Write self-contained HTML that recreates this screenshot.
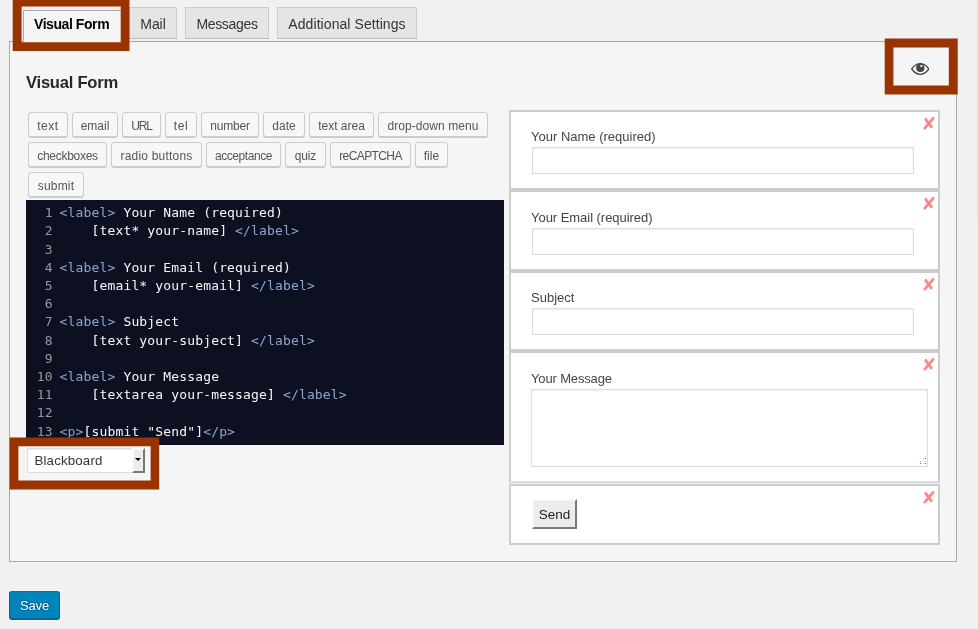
<!DOCTYPE html>
<html lang="en">
<head>
<meta charset="utf-8">
<title>Visual Form</title>
<style>
html,body{margin:0;padding:0;}
body{width:978px;height:629px;overflow:hidden;background:#f1f1f1;position:relative;font-family:"Liberation Sans","DejaVu Sans",sans-serif;color:#444;}
*{box-sizing:border-box;}
.abs{position:absolute;}
.strip{left:976px;top:0;width:2px;height:219px;background:#ebebeb;}
.panel{left:9px;top:41px;width:948px;height:521px;background:#f5f5f5;border:1px solid #aaa;}
.tab{top:7px;height:32px;background:#e5e5e5;border:1px solid #ccc;border-bottom-color:#bbb;font-size:14px;line-height:30px;color:#333;padding:1px 0 0 0;text-align:center;white-space:nowrap;}
.tab.active{top:10px;height:32px;background:#f5f5f5;border:1px solid #aaa;border-bottom:1px solid #f5f5f5;color:#000;font-weight:bold;padding-top:0;line-height:26px;letter-spacing:-0.43px;}
h2{margin:0;left:26px;top:72px;font-size:16.6px;line-height:22px;font-weight:bold;color:#23282d;letter-spacing:-0.25px;white-space:nowrap;}
.tg{height:25px;overflow:visible;background:#f7f7f7;border:1px solid #ccc;border-radius:3px;box-shadow:0 1px 0 #ccc;font-size:12px;line-height:27px;color:#555;text-align:center;white-space:nowrap;}
.r1{top:112px;}.r2{top:142px;}.r3{top:172px;}
.cm{left:26px;top:200px;width:478px;height:245px;background:#0c1021;color:#f8f8f8;font-family:"DejaVu Sans Mono","Liberation Mono",monospace;font-size:13px;line-height:18.2px;letter-spacing:0.15px;padding-top:4px;overflow:hidden;}
.cm .ln{position:relative;height:18.2px;white-space:pre;}
.cm .n{position:absolute;left:0;width:26.8px;text-align:right;color:#999;}
.cm .c{position:absolute;left:33.6px;}
.cm .t{color:#8da6ce;}
.sel{left:27px;top:448px;width:118px;height:25px;background:#fff;border:1px solid #ddd;box-shadow:inset 0 1px 2px rgba(0,0,0,.07);font-size:13.3px;line-height:23px;color:#32373c;padding-left:6.5px;white-space:nowrap;letter-spacing:0.15px;}
.selbtn{left:132px;top:448px;width:13px;height:25px;background:#ececec;border:2px solid;border-color:#fbfbfb #777 #777 #fbfbfb;}
.selarr{left:135.2px;top:458.2px;width:0;height:0;border-left:3.2px solid transparent;border-right:3.2px solid transparent;border-top:3.6px solid #000;}
.box{left:509px;width:431px;background:#fff;border:2px solid #ccc;}
.lbl{left:531px;font-size:13px;line-height:16px;color:#444;white-space:nowrap;}
.inp{left:532px;width:382px;height:27px;background:#fff;border:1px solid #ddd;box-shadow:inset 0 1px 2px rgba(0,0,0,.07);}
.x{left:923px;width:12px;height:13px;}
.send{left:532px;top:499px;width:45px;height:30px;background:#ececec;border:2px solid;border-color:#f8f8f8 #7b7b7b #7b7b7b #f8f8f8;font-size:13.5px;line-height:27px;color:#222;text-align:center;letter-spacing:0px;}
.save{left:9px;top:591px;width:51px;height:28px;background:#0085ba;border:1px solid;border-color:#0073aa #006799 #006799;border-radius:3px;box-shadow:0 1px 0 #006799;color:#fff;font-size:13px;line-height:28px;letter-spacing:-0.2px;text-align:center;text-shadow:0 -1px 1px #006799,1px 0 1px #006799,0 1px 1px #006799,-1px 0 1px #006799;}
</style>
</head>
<body>
<div id="wrap" style="position:absolute;left:0;top:0;width:978px;height:629px;will-change:transform;">
<div class="abs strip"></div>

<div class="abs panel"></div>

<!-- tabs -->
<div class="abs tab active" style="left:23px;width:103px;text-align:left;padding-left:10px;">Visual Form</div>
<div class="abs tab" style="left:129px;width:48px;letter-spacing:-0.07px;">Mail</div>
<div class="abs tab" style="left:185px;width:84px;letter-spacing:-0.33px;">Messages</div>
<div class="abs tab" style="left:277px;width:140px;letter-spacing:0.07px;">Additional Settings</div>

<h2 class="abs">Visual Form</h2>

<!-- tag generator buttons -->
<div class="abs tg r1" style="left:28px;width:40px;letter-spacing:0.54px;">text</div>
<div class="abs tg r1" style="left:72px;width:46px;letter-spacing:-0.02px;">email</div>
<div class="abs tg r1" style="left:122px;width:39px;letter-spacing:-1.17px;">URL</div>
<div class="abs tg r1" style="left:165px;width:32px;letter-spacing:0.6px;">tel</div>
<div class="abs tg r1" style="left:201px;width:58px;letter-spacing:-0.18px;">number</div>
<div class="abs tg r1" style="left:263px;width:42px;letter-spacing:0.04px;">date</div>
<div class="abs tg r1" style="left:309px;width:65px;letter-spacing:-0.01px;">text area</div>
<div class="abs tg r1" style="left:378px;width:110px;letter-spacing:0.08px;">drop-down menu</div>
<div class="abs tg r2" style="left:28px;width:79px;letter-spacing:-0.28px;">checkboxes</div>
<div class="abs tg r2" style="left:111px;width:91px;letter-spacing:0.21px;">radio buttons</div>
<div class="abs tg r2" style="left:206px;width:75px;letter-spacing:-0.43px;">acceptance</div>
<div class="abs tg r2" style="left:285px;width:41px;letter-spacing:-0.13px;">quiz</div>
<div class="abs tg r2" style="left:330px;width:81px;letter-spacing:-0.6px;">reCAPTCHA</div>
<div class="abs tg r2" style="left:415px;width:33px;letter-spacing:0.04px;">file</div>
<div class="abs tg r3" style="left:28px;width:56px;letter-spacing:0.21px;">submit</div>

<!-- code editor -->
<div class="abs cm">
<div class="ln"><span class="n">1</span><span class="c"><span class="t">&lt;label&gt;</span> Your Name (required)</span></div>
<div class="ln"><span class="n">2</span><span class="c">    [text* your-name] <span class="t">&lt;/label&gt;</span></span></div>
<div class="ln" style="top:1px;"><span class="n">3</span><span class="c"></span></div>
<div class="ln"><span class="n">4</span><span class="c"><span class="t">&lt;label&gt;</span> Your Email (required)</span></div>
<div class="ln"><span class="n">5</span><span class="c">    [email* your-email] <span class="t">&lt;/label&gt;</span></span></div>
<div class="ln"><span class="n">6</span><span class="c"></span></div>
<div class="ln"><span class="n">7</span><span class="c"><span class="t">&lt;label&gt;</span> Subject</span></div>
<div class="ln" style="top:1px;"><span class="n">8</span><span class="c">    [text your-subject] <span class="t">&lt;/label&gt;</span></span></div>
<div class="ln"><span class="n">9</span><span class="c"></span></div>
<div class="ln"><span class="n">10</span><span class="c"><span class="t">&lt;label&gt;</span> Your Message</span></div>
<div class="ln"><span class="n">11</span><span class="c">    [textarea your-message] <span class="t">&lt;/label&gt;</span></span></div>
<div class="ln"><span class="n">12</span><span class="c"></span></div>
<div class="ln" style="top:1px;"><span class="n">13</span><span class="c"><span class="t">&lt;p&gt;</span>[submit "Send"]<span class="t">&lt;/p&gt;</span></span></div>
</div>

<!-- theme select -->
<div class="abs sel">Blackboard</div><div class="abs selbtn"></div><div class="abs selarr"></div>

<!-- preview -->
<div class="abs box" style="top:110px;height:80px;"></div>
<div class="abs box" style="top:190px;height:81px;"></div>
<div class="abs box" style="top:271px;height:80px;"></div>
<div class="abs box" style="top:351px;height:132px;border-bottom:1px solid #d2d2d2;"></div>
<div class="abs" style="left:509px;top:481px;width:431px;height:1px;background:#e4e4e4;"></div>
<div class="abs box" style="top:484px;height:61px;"></div>

<div class="abs lbl" style="top:129px;">Your Name (required)</div>
<div class="abs inp" style="top:147px;"></div>
<div class="abs lbl" style="top:210px;letter-spacing:-0.04px;">Your Email (required)</div>
<div class="abs inp" style="top:228px;"></div>
<div class="abs lbl" style="top:290px;">Subject</div>
<div class="abs inp" style="top:308px;"></div>
<div class="abs lbl" style="top:371px;letter-spacing:-0.15px;">Your Message</div>
<div class="abs inp" style="top:389px;left:531px;width:397px;height:77.5px;"></div>
<svg class="abs" style="left:916px;top:454px;width:12px;height:12px;" viewBox="0 0 12 12" shape-rendering="crispEdges"><rect x="2" y="9" width="1" height="1" fill="#dcdcdc"/><rect x="4" y="9" width="1" height="1" fill="#6a6a6a"/><rect x="7" y="9" width="1" height="1" fill="#dcdcdc"/><rect x="9" y="9" width="1" height="1" fill="#6a6a6a"/><rect x="4" y="7" width="1" height="1" fill="#a0a0a0"/><rect x="7" y="7" width="1" height="1" fill="#e2e2e2"/><rect x="9" y="7" width="1" height="1" fill="#c8c8c8"/><rect x="7" y="4" width="1" height="1" fill="#d8d8d8"/><rect x="9" y="4" width="1" height="1" fill="#6a6a6a"/><rect x="9" y="2" width="1" height="1" fill="#cfcfcf"/></svg>
<div class="abs send">Send</div>


<svg class="abs" style="left:922px;top:116px;width:14px;height:15px;" viewBox="0 0 14 15"><path d="M11.1 2.3 L2.8 12.1 M3.7 3.3 L9.3 10.9" stroke="#ff8686" stroke-width="2.8" stroke-linecap="round" fill="none"/></svg>
<svg class="abs" style="left:922px;top:196px;width:14px;height:15px;" viewBox="0 0 14 15"><path d="M11.1 2.3 L2.8 12.1 M3.7 3.3 L9.3 10.9" stroke="#ff8686" stroke-width="2.8" stroke-linecap="round" fill="none"/></svg>
<svg class="abs" style="left:922px;top:277px;width:14px;height:15px;" viewBox="0 0 14 15"><path d="M11.1 2.3 L2.8 12.1 M3.7 3.3 L9.3 10.9" stroke="#ff8686" stroke-width="2.8" stroke-linecap="round" fill="none"/></svg>
<svg class="abs" style="left:922px;top:357px;width:14px;height:15px;" viewBox="0 0 14 15"><path d="M11.1 2.3 L2.8 12.1 M3.7 3.3 L9.3 10.9" stroke="#ff8686" stroke-width="2.8" stroke-linecap="round" fill="none"/></svg>
<svg class="abs" style="left:922px;top:490px;width:14px;height:15px;" viewBox="0 0 14 15"><path d="M11.1 2.3 L2.8 12.1 M3.7 3.3 L9.3 10.9" stroke="#ff8686" stroke-width="2.8" stroke-linecap="round" fill="none"/></svg>

<!-- eye icon -->
<svg class="abs" style="left:910.6px;top:62.6px;width:18.6px;height:12px;" viewBox="0 0 18.6 12"><path d="M0.7 6 C3.8 1.7 6.8 0.7 9.3 0.7 C11.8 0.7 14.8 1.7 17.9 6 C14.8 10.3 11.8 11.3 9.3 11.3 C6.8 11.3 3.8 10.3 0.7 6 Z" fill="none" stroke="#444" stroke-width="1.3"/><circle cx="9.3" cy="4.9" r="4.1" fill="#444"/><circle cx="10.3" cy="3.1" r="1.15" fill="#f5f5f5"/></svg>

<!-- highlight boxes -->
<svg class="abs" style="left:0;top:0;width:978px;height:629px;overflow:visible;" viewBox="0 0 978 629"><path fill="#993300" fill-rule="evenodd" d="M12.7 -2.3H129.5V51H12.7Z M21.6 6.5V42.3H120.7V6.5Z M884.7 38.5H957.7V94.4H884.7Z M893.4 47.4V85.5H948.8V47.4Z M9.6 437.5H159.2V489.4H9.6Z M18.4 446.3V480.4H150.6V446.3Z"/></svg>

<div class="abs save">Save</div>
</div>
</body>
</html>
